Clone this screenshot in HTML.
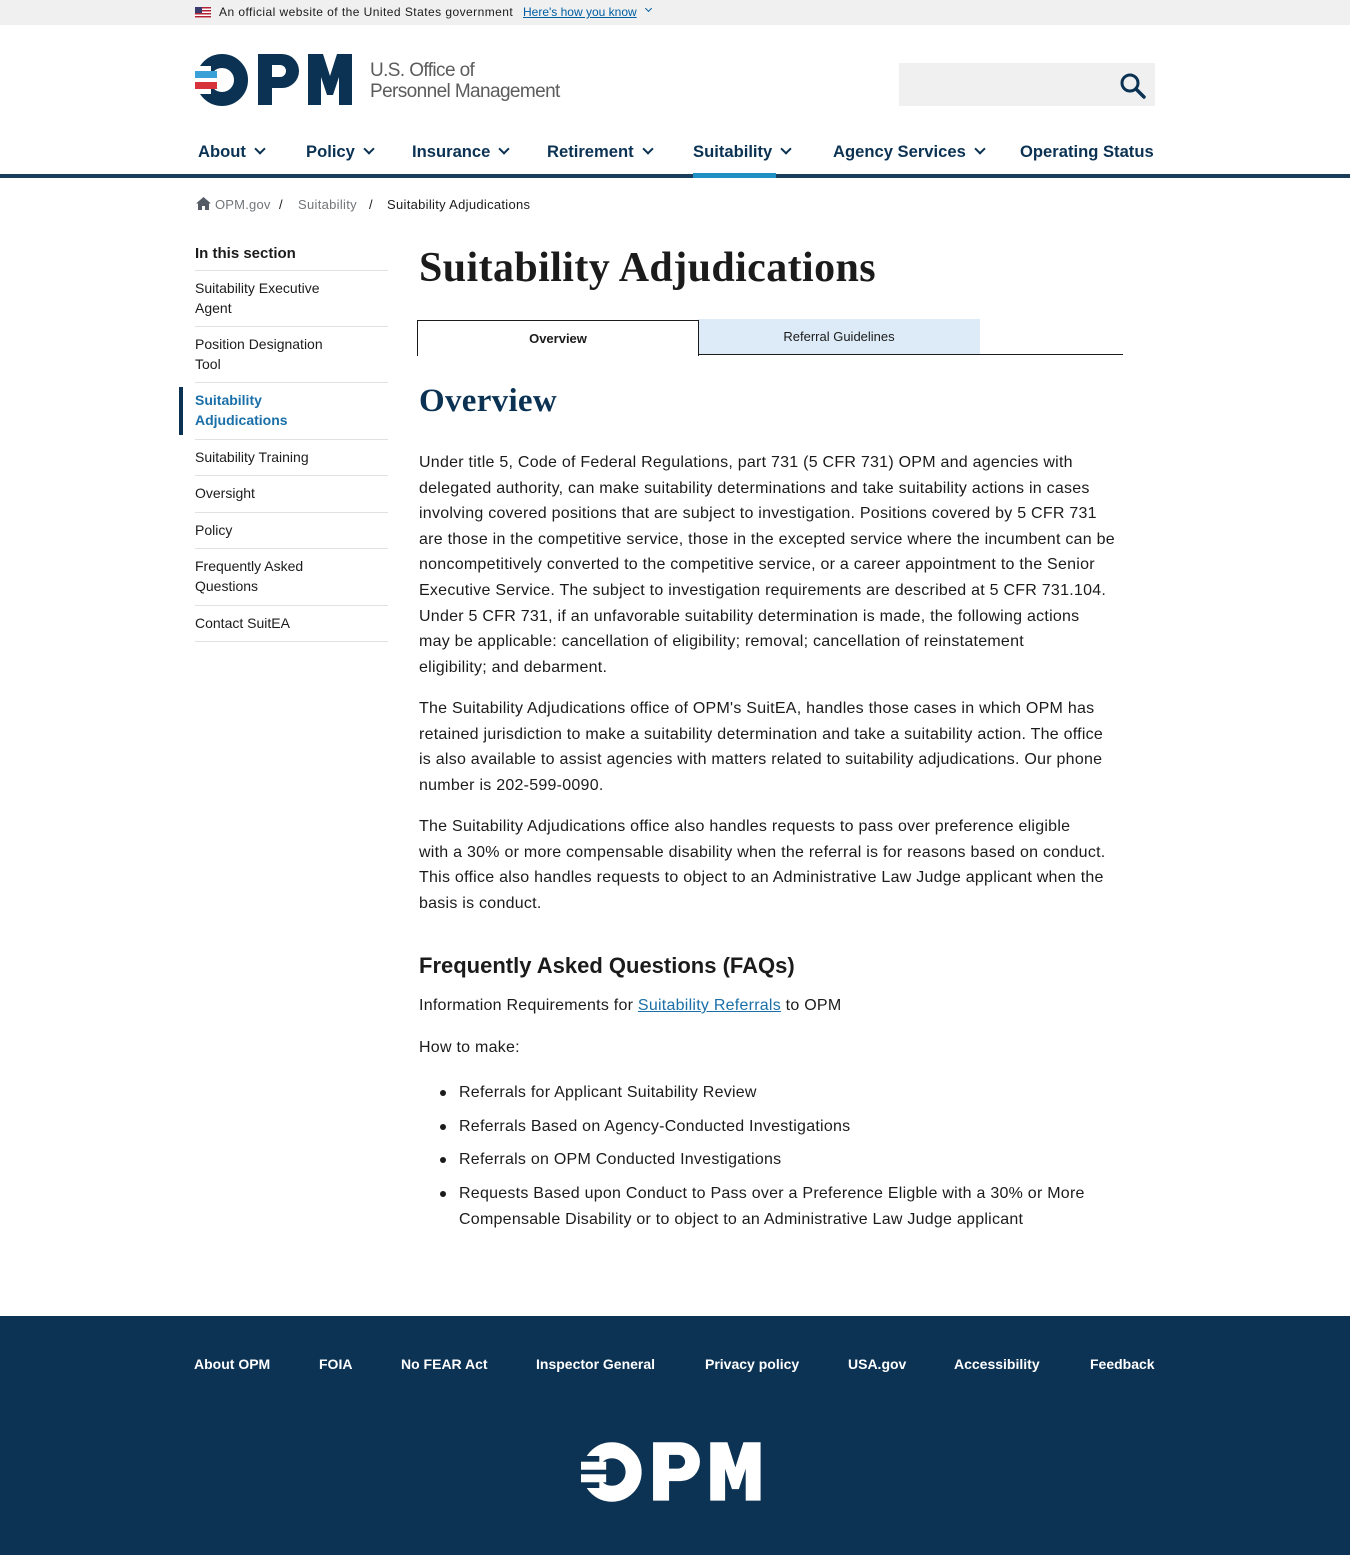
<!DOCTYPE html>
<html><head><meta charset="utf-8"><style>
*{margin:0;padding:0;box-sizing:border-box}
body{width:1350px;height:1555px;position:relative;font-family:"Liberation Sans",sans-serif;color:#1b1b1b;background:#fff;overflow:hidden}
.a{position:absolute;white-space:nowrap}
.nav{font-weight:bold;font-size:16.6px;color:#0b3253;top:142px}
.chev{display:inline-block;width:8px;height:8px;border-right:2px solid #0b3253;border-bottom:2px solid #0b3253;transform:rotate(45deg);margin-left:10px;position:relative;top:-4px}
.side{left:195px;font-size:14px;line-height:20px;color:#1b1b1b}
.hr{position:absolute;left:195px;width:193px;height:1px;background:#dfe1e2}
.p{left:419px;font-size:16px;line-height:25.6px;color:#1b1b1b;letter-spacing:0.25px}
.f{top:1356px;color:#fff;font-weight:bold;font-size:14px}
</style></head><body>
<div class="a" style="left:0;top:0;width:1350px;height:25px;background:#f0f0f0"></div>
<div class="a" style="left:195px;top:7px;width:16px;height:11px;background:repeating-linear-gradient(#b22234 0 1.5px,#fff 1.5px 3px)"><div style="width:7px;height:6px;background:#3c3b6e"></div></div>
<div class="a" style="left:219px;top:5px;font-size:12px;color:#1b1b1b;letter-spacing:0.45px">An official website of the United States government</div>
<div class="a" style="left:523px;top:5px;font-size:12px;color:#005ea2;text-decoration:underline">Here's how you know</div>
<div class="a" style="left:646px;top:6px;width:5px;height:5px;border-right:1.5px solid #005ea2;border-bottom:1.5px solid #005ea2;transform:rotate(45deg)"></div>

<svg class="a" style="left:195px;top:54px" width="160" height="52" viewBox="0 0 160 52">
<circle cx="27" cy="26" r="19" fill="none" stroke="#0b3253" stroke-width="14"/>
<rect x="0" y="12" width="16" height="28" fill="#fff"/>
<rect x="0" y="17" width="22" height="7" fill="#3aa0d8"/>
<rect x="0" y="28" width="22" height="7" fill="#d8333b"/>
<path fill-rule="evenodd" d="M63 0h24a17 17 0 0 1 0 34h-10v17h-14zM77 11h8a6 6 0 0 1 0 12h-8z" fill="#0b3253"/>
<path d="M113 0h15l7 22l7-22h15v51h-13v-28l-6 18h-6l-6-18v28h-13z" fill="#0b3253"/>
</svg>
<div class="a" style="left:370px;top:60px;font-size:19px;line-height:21px;color:#5c5c5c;letter-spacing:-0.6px">U.S. Office of<br>Personnel Management</div>

<div class="a" style="left:899px;top:63px;width:256px;height:43px;background:#f0f0f0"></div>
<svg class="a" style="left:1119px;top:72px" width="28" height="28" viewBox="0 0 28 28"><circle cx="11" cy="11" r="8" fill="none" stroke="#0b3253" stroke-width="3"/><path d="M17 17l8 8" stroke="#0b3253" stroke-width="3.5" stroke-linecap="round"/></svg>

<div class="a nav" style="left:198px">About<span class="chev"></span></div>
<div class="a nav" style="left:306px">Policy<span class="chev"></span></div>
<div class="a nav" style="left:412px">Insurance<span class="chev"></span></div>
<div class="a nav" style="left:547px">Retirement<span class="chev"></span></div>
<div class="a nav" style="left:693px">Suitability<span class="chev"></span></div>
<div class="a nav" style="left:833px">Agency Services<span class="chev"></span></div>
<div class="a nav" style="left:1020px">Operating Status</div>
<div class="a" style="left:0;top:174px;width:1350px;height:4px;background:#1a3d5a"></div>
<div class="a" style="left:693px;top:173px;width:83px;height:5px;background:#1f8fc4"></div>

<svg class="a" style="left:196px;top:197px" width="15" height="13" viewBox="0 0 15 13"><path d="M7.5 0L0 6.5h2V13h4V9h3v4h4V6.5h2z" fill="#565c65"/></svg>
<div class="a" style="left:215px;top:197px;font-size:13px;color:#71767a;letter-spacing:0.2px">OPM.gov</div>
<div class="a" style="left:279px;top:197px;font-size:13px;color:#1b1b1b">/</div>
<div class="a" style="left:298px;top:197px;font-size:13px;color:#71767a;letter-spacing:0.3px">Suitability</div>
<div class="a" style="left:369px;top:197px;font-size:13px;color:#1b1b1b">/</div>
<div class="a" style="left:387px;top:197px;font-size:13px;color:#1b1b1b;letter-spacing:0.3px">Suitability Adjudications</div>

<div class="a side" style="top:244px;font-weight:bold;font-size:15px">In this section</div>
<div class="hr" style="top:270px"></div>
<div class="a side" style="top:278px">Suitability Executive<br>Agent</div>
<div class="hr" style="top:326px"></div>
<div class="a side" style="top:334px">Position Designation<br>Tool</div>
<div class="hr" style="top:382px"></div>
<div class="a" style="left:179px;top:387px;width:4px;height:48px;background:#0b3253"></div>
<div class="a side" style="top:390px;color:#1a6fa8;font-weight:bold">Suitability<br>Adjudications</div>
<div class="hr" style="top:439px"></div>
<div class="a side" style="top:447px">Suitability Training</div>
<div class="hr" style="top:475px"></div>
<div class="a side" style="top:483px">Oversight</div>
<div class="hr" style="top:512px"></div>
<div class="a side" style="top:520px">Policy</div>
<div class="hr" style="top:548px"></div>
<div class="a side" style="top:556px">Frequently Asked<br>Questions</div>
<div class="hr" style="top:605px"></div>
<div class="a side" style="top:613px">Contact SuitEA</div>
<div class="hr" style="top:641px"></div>

<div class="a" style="left:419px;top:244px;font-family:'Liberation Serif',serif;font-weight:bold;font-size:42px;letter-spacing:0.4px;color:#1b1b1b">Suitability Adjudications</div>
<div class="a" style="left:698px;top:319px;width:282px;height:35px;background:#dcebf7"></div>
<div class="a" style="left:417px;top:354px;width:706px;height:1px;background:#1b1b1b"></div>
<div class="a" style="left:417px;top:320px;width:282px;height:36px;background:#fff;border:1px solid #1b1b1b;border-bottom:none"></div>
<div class="a" style="left:417px;top:331px;width:282px;text-align:center;font-size:13px;font-weight:bold">Overview</div>
<div class="a" style="left:698px;top:329px;width:282px;text-align:center;font-size:13px">Referral Guidelines</div>

<div class="a" style="left:419px;top:383px;font-family:'Liberation Serif',serif;font-weight:bold;font-size:33px;letter-spacing:0.3px;color:#0b3253">Overview</div>

<div class="a p" style="top:450px">Under title 5, Code of Federal Regulations, part 731 (5 CFR 731) OPM and agencies with<br>delegated authority, can make suitability determinations and take suitability actions in cases<br>involving covered positions that are subject to investigation. Positions covered by 5 CFR 731<br>are those in the competitive service, those in the excepted service where the incumbent can be<br>noncompetitively converted to the competitive service, or a career appointment to the Senior<br>Executive Service. The subject to investigation requirements are described at 5 CFR 731.104.<br>Under 5 CFR 731, if an unfavorable suitability determination is made, the following actions<br>may be applicable: cancellation of eligibility; removal; cancellation of reinstatement<br>eligibility; and debarment.</div>
<div class="a p" style="top:696px">The Suitability Adjudications office of OPM's SuitEA, handles those cases in which OPM has<br>retained jurisdiction to make a suitability determination and take a suitability action. The office<br>is also available to assist agencies with matters related to suitability adjudications. Our phone<br>number is 202-599-0090.</div>
<div class="a p" style="top:814px">The Suitability Adjudications office also handles requests to pass over preference eligible<br>with a 30% or more compensable disability when the referral is for reasons based on conduct.<br>This office also handles requests to object to an Administrative Law Judge applicant when the<br>basis is conduct.</div>

<div class="a" style="left:419px;top:953px;font-size:22px;font-weight:bold">Frequently Asked Questions (FAQs)</div>
<div class="a p" style="top:993px">Information Requirements for <span style="color:#1a6fa8;text-decoration:underline">Suitability Referrals</span> to OPM</div>
<div class="a p" style="top:1035px">How to make:</div>
<div class="a p" style="left:459px;top:1080px">Referrals for Applicant Suitability Review</div>
<div class="a p" style="left:459px;top:1114px">Referrals Based on Agency-Conducted Investigations</div>
<div class="a p" style="left:459px;top:1147px">Referrals on OPM Conducted Investigations</div>
<div class="a p" style="left:459px;top:1181px">Requests Based upon Conduct to Pass over a Preference Eligble with a 30% or More<br>Compensable Disability or to object to an Administrative Law Judge applicant</div>
<div class="a" style="left:440px;top:1090px;width:6px;height:6px;border-radius:50%;background:#1b1b1b"></div>
<div class="a" style="left:440px;top:1124px;width:6px;height:6px;border-radius:50%;background:#1b1b1b"></div>
<div class="a" style="left:440px;top:1157px;width:6px;height:6px;border-radius:50%;background:#1b1b1b"></div>
<div class="a" style="left:440px;top:1191px;width:6px;height:6px;border-radius:50%;background:#1b1b1b"></div>

<div class="a" style="left:0;top:1316px;width:1350px;height:239px;background:#0c3354"></div>
<div class="a f" style="left:194px">About OPM</div>
<div class="a f" style="left:319px">FOIA</div>
<div class="a f" style="left:401px">No FEAR Act</div>
<div class="a f" style="left:536px">Inspector General</div>
<div class="a f" style="left:705px">Privacy policy</div>
<div class="a f" style="left:848px">USA.gov</div>
<div class="a f" style="left:954px">Accessibility</div>
<div class="a f" style="left:1090px">Feedback</div>
<svg class="a" style="left:581px;top:1442px" width="183" height="60" viewBox="0 0 160 52">
<circle cx="27" cy="26" r="19" fill="none" stroke="#fff" stroke-width="14"/>
<rect x="0" y="12" width="16" height="28" fill="#0c3354"/>
<rect x="0" y="17" width="22" height="7" fill="#fff"/>
<rect x="0" y="28" width="22" height="7" fill="#fff"/>
<path fill-rule="evenodd" d="M63 0h24a17 17 0 0 1 0 34h-10v17h-14zM77 11h8a6 6 0 0 1 0 12h-8z" fill="#fff"/>
<path d="M113 0h15l7 22l7-22h15v51h-13v-28l-6 18h-6l-6-18v28h-13z" fill="#fff"/>
</svg>
</body></html>
